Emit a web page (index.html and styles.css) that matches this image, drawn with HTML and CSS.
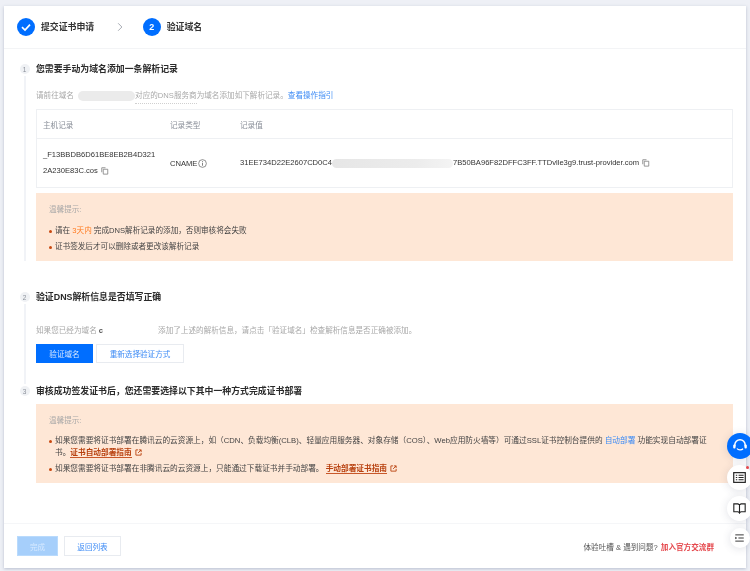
FILE: index.html
```html
<!DOCTYPE html>
<html lang="zh-CN">
<head>
<meta charset="utf-8">
<title>验证域名</title>
<link rel="stylesheet" href="styles.css">
</head>
<body>
<div class="page">
  <main class="card">
    <header class="steps">
      <span class="step-dot"><svg class="check" viewBox="0 0 18 18"><path d="M5 9.200l3 2.800 5-5.400" fill="none" stroke="#fff" stroke-width="1.700"/></svg></span>
      <span class="step-text">提交证书申请</span>
      <svg class="chevron" viewBox="0 0 8 12"><path d="M1.500 1l5 5-5 5" fill="none" stroke="#8a8f99" stroke-width="1"/></svg>
      <span class="step-dot">2</span>
      <span class="step-text">验证域名</span>
    </header>

    <div class="content">
      <section class="sec sec-one">
        <div class="rail"><span class="badge">1</span><span class="line"></span></div>
        <div class="body">
          <h2 class="title">您需要手动为域名添加一条解析记录</h2>
          <p class="desc desc-one">请前往域名 <span class="mask mask-a"></span><span class="dotted">对应的DNS服务商</span>为域名添加如下解析记录。<a class="link">查看操作指引</a></p>
          <div class="table">
            <div class="row row-head">
              <div class="col-a">主机记录</div>
              <div class="col-b">记录类型</div>
              <div class="col-c">记录值</div>
            </div>
            <div class="row row-data">
              <div class="col-a host">_F13BBDB6D61BE8EB2B4D3212A230E83C.cos <svg class="copy" viewBox="0 0 10 10"><path d="M1 7V1h5M3 3h6v6.500H3z" fill="none" stroke="#777" stroke-width="1"/></svg></div>
              <div class="col-b">CNAME<svg class="info" viewBox="0 0 10 10"><circle cx="5" cy="5" r="4.300" fill="none" stroke="#666" stroke-width=".8"/><path d="M5 4.200v3.300M5 2.400v1" stroke="#666" stroke-width=".9"/></svg></div>
              <div class="col-c">31EE734D22E2607CD0C4<span class="mask mask-b"></span>7B50BA96F82DFFC3FF.TTDvlle3g9.trust-provider.com <svg class="copy" viewBox="0 0 10 10"><path d="M1 7V1h5M3 3h6v6.500H3z" fill="none" stroke="#777" stroke-width="1"/></svg></div>
            </div>
          </div>
          <div class="notice notice-one">
            <p class="notice-head">温馨提示:</p>
            <ul class="notice-list">
              <li>请在 <em>3天内</em> 完成DNS解析记录的添加，否则审核将会失败</li>
              <li>证书签发后才可以删除或者更改该解析记录</li>
            </ul>
          </div>
        </div>
      </section>

      <section class="sec sec-two">
        <div class="rail"><span class="badge">2</span><span class="line"></span></div>
        <div class="body">
          <h2 class="title">验证DNS解析信息是否填写正确</h2>
          <p class="desc desc-two">如果您已经为域名 <b class="dark">c</b><span class="mask mask-c"></span>添加了上述的解析信息，请点击「验证域名」检查解析信息是否正确被添加。</p>
          <div class="actions">
            <button class="btn primary verify">验证域名</button>
            <button class="btn reselect">重新选择验证方式</button>
          </div>
        </div>
      </section>

      <section class="sec sec-three">
        <div class="rail"><span class="badge">3</span></div>
        <div class="body">
          <h2 class="title">审核成功签发证书后，您还需要选择以下其中一种方式完成证书部署</h2>
          <div class="notice notice-three">
            <p class="notice-head">温馨提示:</p>
            <ul class="notice-list">
              <li>如果您需要将证书部署在腾讯云的云资源上，如（CDN、负载均衡(CLB)、轻量应用服务器、对象存储（COS）、Web应用防火墙等）可通过SSL证书控制台提供的 <a class="link">自动部署</a> 功能实现自动部署证书。<a class="guide">证书自动部署指南</a> <svg class="ext" viewBox="0 0 8 8"><path d="M3.500 1H1v6h6V4.500M4.500 1H7v2.500M7 1L3.500 4.500" fill="none" stroke="#b8400e" stroke-width="1"/></svg></li>
              <li>如果您需要将证书部署在非腾讯云的云资源上，只能通过下载证书并手动部署。 <a class="guide">手动部署证书指南</a> <svg class="ext" viewBox="0 0 8 8"><path d="M3.500 1H1v6h6V4.500M4.500 1H7v2.500M7 1L3.500 4.500" fill="none" stroke="#b8400e" stroke-width="1"/></svg></li>
            </ul>
          </div>
        </div>
      </section>
    </div>

    <footer class="footer">
      <button class="btn primary disabled finish">完成</button>
      <button class="btn back">返回列表</button>
      <span class="feedback">体验吐槽 &amp; 遇到问题? <a class="join">加入官方交流群</a></span>
    </footer>
  </main>

  <aside class="floats">
    <span class="fab fab-blue"><svg viewBox="0 0 16 16"><path d="M2.800 8.500V7a5.200 5.200 0 0 1 10.400 0v1.500" fill="none" stroke="#fff" stroke-width="1.500"/><rect x="1.200" y="6.500" width="2.300" height="4" rx="1" fill="#fff"/><rect x="12.500" y="6.500" width="2.300" height="4" rx="1" fill="#fff"/><path d="M5 10.500c1.200 1.700 4.500 1.900 6 .2" fill="none" stroke="#fff" stroke-width="1.300"/></svg></span>
    <span class="fab fab-list"><svg viewBox="0 0 14 12"><rect x=".7" y=".7" width="12.600" height="10.600" fill="none" stroke="#222" stroke-width="1.300"/><path d="M3 3.500h1.500M3 6h1.500M3 8.500h1.500M6 3.500h5.500M6 6h5.500M6 8.500h5.500" stroke="#222" stroke-width="1.200"/></svg><i class="dot"></i></span>
    <span class="fab fab-book"><svg viewBox="0 0 14 12"><path d="M.8 1h4.500L7 2v8.500L5.300 9.500H.8zM13.200 1H8.700L7 2v8.500l1.700-1H13.200z" fill="none" stroke="#222" stroke-width="1.200"/><path d="M7 9v2.500" stroke="#222" stroke-width="1.200"/></svg></span>
    <span class="fab fab-menu"><svg viewBox="0 0 10 9"><path d="M0 1h9.500M3.500 4.500h6M0 8h9.500" stroke="#222" stroke-width="1"/><path d="M0 3v3l2-1.500z" fill="#222"/></svg></span>
  </aside>
</div>
</body>
</html>
```

FILE: styles.css
```css
* { box-sizing: border-box; }
html, body { margin: 0; height: 100%; overflow: hidden; background: #eef0f6; }
body { font-family: "Liberation Sans", "Noto Sans CJK SC", sans-serif; font-size: 7.6px; color: #333; }
p, h2, ul { margin: 0; padding: 0; }

.page { position: relative; height: 571px; padding: 6px 4px 3px 4px; display: flex; filter: blur(.3px); }
.card { flex: 1; display: flex; flex-direction: column; background: #fff; box-shadow: 0 1px 3px rgba(120,130,160,.45); }

.steps { height: 43px; flex: none; display: flex; align-items: center; padding-left: 13px; padding-bottom: 1px; border-bottom: 1px solid #f3f4f6; }
.step-dot { width: 18px; height: 18px; border-radius: 50%; background: #006eff; color: #fff; font-size: 9px; font-weight: 700; display: flex; align-items: center; justify-content: center; }
.check { width: 18px; height: 18px; }
.step-text { margin-left: 6px; font-size: 8.900px; font-weight: 700; color: #333; }
.chevron { width: 6px; height: 10px; margin: 0 20px 0 22.500px; }

.content { flex: 1; padding-top: 13px; }
.sec { display: flex; }
.rail { width: 32px; flex: none; display: flex; flex-direction: column; align-items: center; padding: 2px 0 0 9px; }
.badge { width: 10px; height: 10px; flex: none; border-radius: 50%; background: #eff1f4; color: #8a8f99; font-size: 6.500px; display: flex; align-items: center; justify-content: center; }
.line { width: 2px; flex: 1; background: #f1f3f7; margin-top: 2px; }
.body { flex: 1; padding-right: 13px; min-width: 0; }
.title { font-size: 8.900px; line-height: 14px; font-weight: 700; color: #2a2a2a; }

.desc { color: #a8a8a8; line-height: 12px; white-space: nowrap; }
.desc-one { margin-top: 14px; }
.desc-two { margin-top: 21px; }
.dark { color: #555; }
.link { color: #3d8bf5; }
.dotted { border-bottom: 1px dotted #d0d0d0; padding-bottom: 3px; }
.mask { display: inline-block; vertical-align: middle; height: 10px; border-radius: 5px; }
.mask-a { width: 57px; background: #ebebeb; margin-left: 2px; }
.mask-b { width: 121px; height: 9px; background: linear-gradient(90deg, #e6e6e6, #ececec 70%, #f4f4f4); }
.mask-c { width: 55px; height: 11px; background: #fff; }

.table { margin-top: 7px; border: 1px solid #eef0f3; color: #333; }
.row { display: flex; align-items: center; padding-left: 6px; }
.row-head { height: 29px; color: #8a8f99; border-bottom: 1px solid #eef0f3; }
.row-data { height: 48px; }
.col-a { width: 127px; flex: none; }
.col-b { width: 70px; flex: none; }
.col-c { flex: 1; white-space: nowrap; }
.host { word-break: break-all; line-height: 16px; padding-right: 12px; }
.copy { width: 7.500px; height: 7.500px; vertical-align: -1.500px; margin-left: 1px; }
.info { width: 9px; height: 9px; vertical-align: -2px; margin-left: 1px; }

.notice { background: #fee7d6; margin-top: 5px; padding: 12px 13px 0; }
.notice-one { height: 68px; }
.notice-three { height: 79px; margin-top: 6px; }
.notice-head { color: #a8a8a8; line-height: 10px; }
.notice-list { list-style: none; margin-top: 8px; color: #444; }
.notice-list li { position: relative; padding-left: 6px; line-height: 16px; }
.notice-list li::before { content: ""; position: absolute; left: 0; top: 6.500px; width: 3px; height: 3px; border-radius: 50%; background: #c9480f; }
.notice-list em { font-style: normal; color: #ff7a1f; }
.notice-three .notice-list { margin-top: 9px; font-size: 7.680px; }
.notice-three .notice-list li { line-height: 12px; margin-bottom: 4px; padding-right: 10px; }
.notice-three .notice-list li::before { top: 4.500px; }
.guide { color: #b8400e; font-weight: 700; border-bottom: 1px solid #c9582a; }
.ext { width: 7px; height: 7px; vertical-align: -1px; margin-left: 1px; }

.sec-one { padding-bottom: 29px; }
.sec-two { height: 94px; }
.actions { display: flex; gap: 3px; margin-top: 7px; }
.btn { height: 20px; padding: 0; font: inherit; border: 1px solid #e8ebf0; background: #fff; color: #3d8bf5; }
.verify, .reselect { height: 19px; }
.primary { background: #006eff; border-color: #006eff; color: #d9e9ff; }
.disabled { background: #a6cffb; border-color: #b9dafc; color: #d6e9ff; }
.verify { width: 57px; }
.reselect { width: 88px; }

.footer { height: 45px; flex: none; display: flex; align-items: center; gap: 6px; padding: 0 32px 0 13px; border-top: 1px solid #f5f6f8; }
.finish { width: 41px; }
.back { width: 57px; }
.feedback { margin-left: auto; color: #555; }
.join { color: #e5484d; font-weight: 700; margin-left: 1px; }

.floats { position: absolute; right: -3px; top: 433px; width: 27px; display: flex; flex-direction: column; align-items: center; gap: 6px; }
.fab { position: relative; width: 25px; height: 25px; border-radius: 50%; background: #fff; box-shadow: 0 1px 8px rgba(60,70,100,.16); display: flex; align-items: center; justify-content: center; }
.fab svg { width: 13px; height: 11px; }
.fab-blue { width: 26px; height: 26px; background: #006eff; }
.fab-blue svg { width: 16px; height: 16px; }
.fab-menu { width: 20px; height: 20px; margin-top: 1px; }
.fab-menu svg { width: 9.500px; height: 8px; }
.dot { position: absolute; right: 3px; top: 1px; width: 3px; height: 3px; border-radius: 50%; background: #e5484d; }
```
